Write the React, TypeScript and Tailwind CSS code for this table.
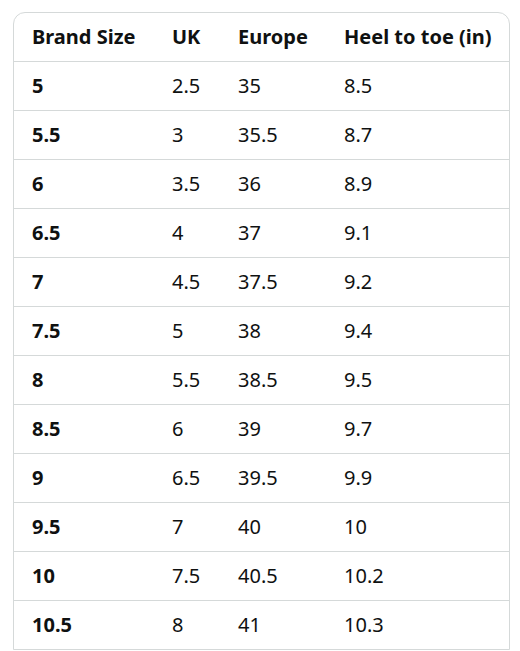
const rows = [
  ['5', '2.5', '35', '8.5'],
  ['5.5', '3', '35.5', '8.7'],
  ['6', '3.5', '36', '8.9'],
  ['6.5', '4', '37', '9.1'],
  ['7', '4.5', '37.5', '9.2'],
  ['7.5', '5', '38', '9.4'],
  ['8', '5.5', '38.5', '9.5'],
  ['8.5', '6', '39', '9.7'],
  ['9', '6.5', '39.5', '9.9'],
  ['9.5', '7', '40', '10'],
  ['10', '7.5', '40.5', '10.2'],
  ['10.5', '8', '41', '10.3'],
];

export default function App() {
  return (
    <div className="bg-white min-h-[651px] pl-[13px] pt-[12px] pr-[10px] font-['Noto_Sans',sans-serif] text-[#0f1111]">
      <div className="border border-[#d5d9d9] rounded-t-xl overflow-hidden">
        <table className="w-full border-collapse text-[20px] leading-none">
          <thead>
            <tr className="h-[48px]">
              <th className="w-[140px] pl-[18px] text-left font-bold">Brand Size</th>
              <th className="w-[66px] pl-[18px] text-left font-bold">UK</th>
              <th className="w-[106px] pl-[18px] text-left font-bold">Europe</th>
              <th className="pl-[18px] text-left font-bold">Heel to toe (in)</th>
            </tr>
          </thead>
          <tbody>
            {rows.map((r) => (
              <tr key={r[0]} className="h-[49px] border-t border-[#d5d9d9]">
                <td className="pl-[18px] font-bold">{r[0]}</td>
                <td className="pl-[18px]">{r[1]}</td>
                <td className="pl-[18px]">{r[2]}</td>
                <td className="pl-[18px]">{r[3]}</td>
              </tr>
            ))}
          </tbody>
        </table>
      </div>
    </div>
  );
}
